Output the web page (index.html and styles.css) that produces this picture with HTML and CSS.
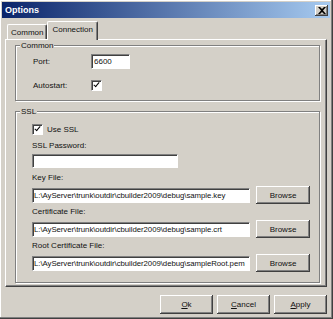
FILE: index.html
```html
<!DOCTYPE html>
<html lang="en">

<head>
    <meta charset="UTF-8">
    <title>Options</title>
    <link rel="stylesheet" href="styles.css">
</head>

<body>
    <div class="window">
        <!-- Title bar -->
        <div class="titlebar">
            <span class="title">Options</span>
            <div class="close-btn">
                <svg width="8" height="7" viewBox="0 0 8 7">
                    <path d="M0 0h2l2 2 2-2h2L5 3.5 8 7H6L4 5 2 7H0l3-3.5z" fill="#000"/>
                </svg>
            </div>
        </div>

        <!-- Tabs -->
        <div class="tabs">
            <div class="tab">Common</div>
            <div class="tab active">Connection</div>
        </div>

        <div class="panel">
            <div class="group group-common">
                <span class="legend">Common</span>
                <div class="row">
                    <label class="field-label">Port:</label>
                    <div class="edit edit-port">6600</div>
                </div>
                <div class="row">
                    <label class="field-label">Autostart:</label>
                    <span class="check checked"></span>
                </div>
            </div>

            <div class="group group-ssl">
                <span class="legend">SSL</span>
                <div class="check-row">
                    <span class="check checked"></span>
                    <span>Use SSL</span>
                </div>
                <div class="label">SSL Password:</div>
                <div class="edit edit-password"></div>
                <div class="label">Key File:</div>
                <div class="file-row">
                    <div class="edit edit-path">L:\AyServer\trunk\outdir\cbuilder2009\debug\sample.key</div>
                    <button class="btn">Browse</button>
                </div>
                <div class="label">Certificate File:</div>
                <div class="file-row">
                    <div class="edit edit-path">L:\AyServer\trunk\outdir\cbuilder2009\debug\sample.crt</div>
                    <button class="btn">Browse</button>
                </div>
                <div class="label">Root Certificate File:</div>
                <div class="file-row">
                    <div class="edit edit-path">L:\AyServer\trunk\outdir\cbuilder2009\debug\sampleRoot.pem</div>
                    <button class="btn">Browse</button>
                </div>
            </div>
        </div>

        <!-- Dialog buttons -->
        <div class="buttons">
            <button class="btn"><u>O</u>k</button>
            <button class="btn"><u>C</u>ancel</button>
            <button class="btn"><u>A</u>pply</button>
        </div>
    </div>
</body>

</html>
```

FILE: styles.css
```css
body {
    margin: 0;
    font-family: "Liberation Sans", Arial, sans-serif;
    font-size: 8px;
    color: #111;
    background: #d4d0c8;
}

.window {
    width: 333px;
    height: 319px;
    box-sizing: border-box;
    padding: 2px 2px 0 2px;
    background: #d4d0c8;
    border-right: 1px solid #404040;
    border-bottom: 1px solid #404040;
    box-shadow: inset -1px -1px #808080, inset 1px 1px #fff;
}

/* Title bar */
.titlebar {
    height: 16px;
    display: flex;
    align-items: center;
    justify-content: space-between;
    padding: 0 2px 0 3px;
    background: linear-gradient(to right, #0a246a, #a6caf0);
}

.title {
    color: #fff;
    font-weight: bold;
    font-size: 9px;
}

.close-btn {
    width: 13px;
    height: 11px;
    display: flex;
    align-items: center;
    justify-content: center;
    background: #d4d0c8;
    box-shadow: inset -1px -1px #404040, inset 1px 1px #fff, inset -2px -2px #808080;
}

/* Tabs */
.tabs {
    display: flex;
    align-items: flex-end;
    height: 18px;
    margin: 3px 0 0 0;
    padding-left: 5px;
}

.tab {
    height: 15px;
    line-height: 16px;
    padding: 0 3px;
    box-sizing: border-box;
    border-top: 1px solid #fff;
    border-left: 1px solid #fff;
    border-right: 1px solid #404040;
    border-radius: 2px 2px 0 0;
    box-shadow: inset -1px 0 #808080;
}

.tab.active {
    height: 19px;
    line-height: 16px;
    padding: 0 4px;
    margin-bottom: -1px;
    background: #d4d0c8;
    position: relative;
    z-index: 1;
}

.panel {
    height: 248px;
    box-sizing: border-box;
    margin: 0 3px 0 3px;
    padding: 5px 6px 0 9px;
    border-top: 1px solid #fff;
    border-left: 1px solid #fff;
    border-right: 1px solid #404040;
    border-bottom: 1px solid #404040;
    box-shadow: inset -1px -1px #808080;
}

/* Group boxes */
.group {
    position: relative;
    box-sizing: border-box;
    border: 1px solid #808080;
    box-shadow: inset 1px 1px #fff, 1px 1px #fff;
}

.legend {
    position: absolute;
    top: -6px;
    left: 4px;
    padding: 0 1px;
    line-height: 11px;
    background: #d4d0c8;
}

.group-common {
    height: 56px;
    padding: 8px 0 0 17px;
}

.group-ssl {
    height: 172px;
    margin-top: 10px;
    padding: 10px 0 0 16px;
}

.row {
    display: flex;
    align-items: center;
    height: 15px;
    margin-bottom: 9px;
}

.field-label {
    width: 58px;
}

.edit {
    box-sizing: border-box;
    height: 15px;
    line-height: 13px;
    padding: 0 2px;
    background: #fff;
    border-top: 1px solid #808080;
    border-left: 1px solid #808080;
    border-right: 1px solid #fff;
    border-bottom: 1px solid #fff;
    box-shadow: inset 1px 1px #404040, 1px 1px #d4d0c8;
    white-space: nowrap;
    overflow: hidden;
}

.edit-port {
    width: 39px;
}

.edit-password {
    width: 146px;
    height: 14px;
    margin-top: 1px;
}

.edit-path {
    width: 218px;
    padding: 0 1px;
    font-size: 7.8px;
    letter-spacing: -0.05px;
}

.check {
    display: inline-block;
    width: 11px;
    height: 11px;
    box-sizing: border-box;
    background: #fff;
    border-top: 1px solid #808080;
    border-left: 1px solid #808080;
    border-right: 1px solid #fff;
    border-bottom: 1px solid #fff;
    box-shadow: inset 1px 1px #404040;
    position: relative;
}

.check.checked::after {
    content: "";
    position: absolute;
    left: 3px;
    top: 0px;
    width: 2px;
    height: 5px;
    border-right: 1.5px solid #000;
    border-bottom: 1.5px solid #000;
    transform: rotate(40deg);
}

.check-row {
    display: flex;
    align-items: center;
    gap: 4px;
    height: 14px;
}

.label {
    height: 14px;
    line-height: 14px;
    margin-top: 3px;
}

.file-row {
    display: flex;
    align-items: center;
    gap: 6px;
    height: 18px;
    margin-top: 1px;
}

.file-row + .label {
    margin-top: 1px;
}

.btn {
    width: 54px;
    height: 18px;
    padding: 0;
    font-family: inherit;
    font-size: 8px;
    color: #111;
    background: #d4d0c8;
    border: none;
    box-shadow: inset -1px -1px #404040, inset 1px 1px #fff, inset -2px -2px #808080;
}

/* Dialog buttons */
.buttons {
    display: flex;
    justify-content: flex-end;
    gap: 4px;
    margin-top: 8px;
    padding-right: 3px;
}

.buttons .btn {
    width: 53px;
    height: 19px;
}
```
